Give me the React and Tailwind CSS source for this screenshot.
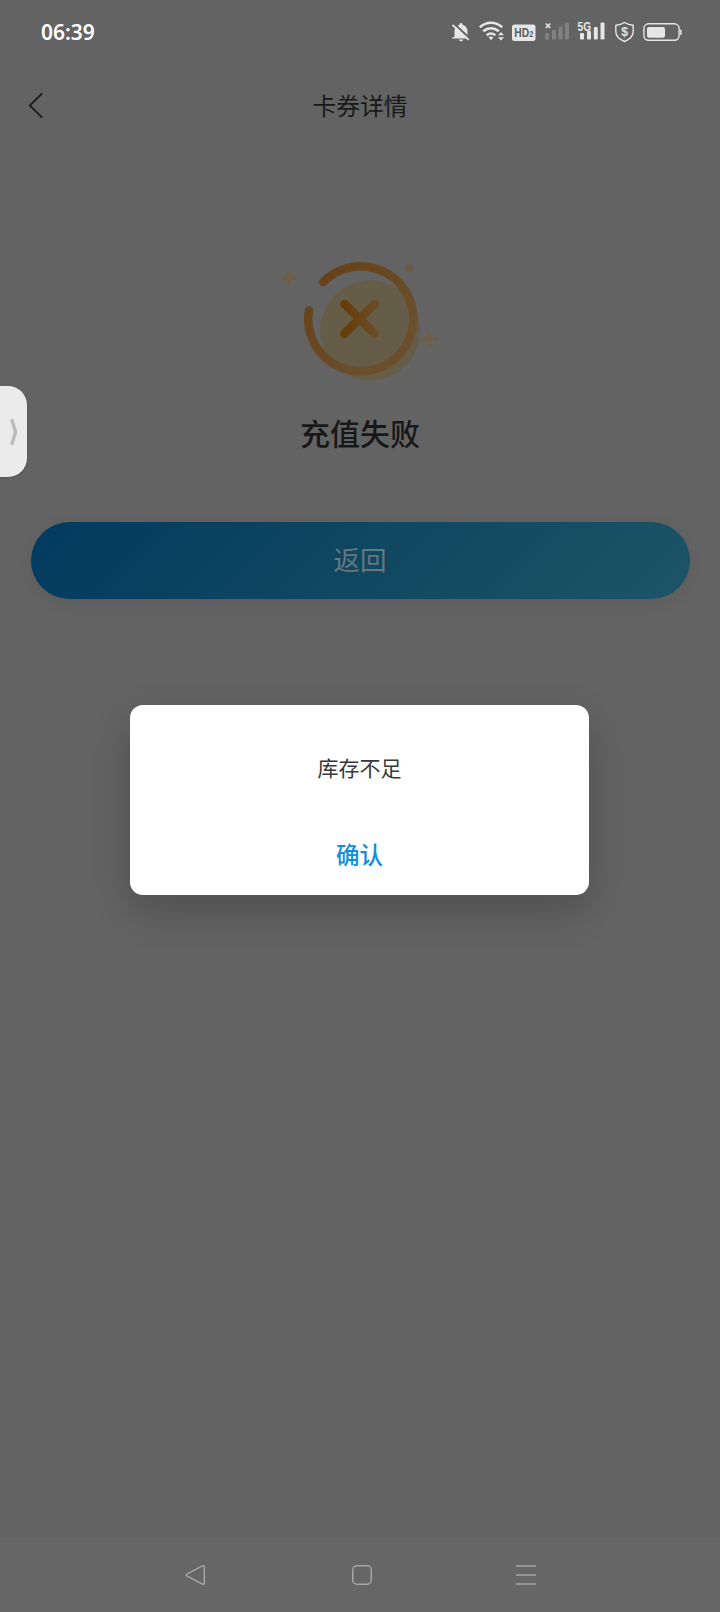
const FONT = "font-['Noto_Sans_CJK_SC',sans-serif]";

function StatusIcons() {
  return (
    <div className="flex h-6 items-center text-[#e6e6e6]">
      <svg className="mr-[9px] h-6 w-[18px]" viewBox="453 20 18 24" fill="none">
        <path d="M455.500 37v-6c0-3.500 2.200-5.500 4.700-6.100a1.800 1.800 0 0 1 3.600 0c2.600.600 4.700 2.600 4.700 6.100v3.500l1.800 2.700v1.300H453.200V37.200Z" fill="currentColor" />
        <path d="M459.800 39.500h4.400c-.3 1.200-1.100 1.800-2.200 1.800s-1.900-.6-2.200-1.800Z" fill="currentColor" />
        <path d="M454.800 23.500l16 15" stroke="#636363" strokeWidth="2" />
        <path d="M453.500 25l16.200 14.800" stroke="currentColor" strokeWidth="1.800" />
      </svg>
      <svg className="mr-[7px] h-6 w-[26px]" viewBox="479 20 26 24" fill="none">
        <g stroke="currentColor" strokeWidth="2.600">
          <path d="M479.800 27.200c6.800-5.900 15.600-5.900 22.400 0" />
          <path d="M483.200 31.300c4.800-4 10.800-4 15.600 0" />
          <path d="M486.700 35.200c2.800-2.200 5.800-2.200 8.600 0" />
        </g>
        <path d="M488.500 37.300c1.600-1.200 3.400-1.200 5 0l-2.500 3Z" fill="currentColor" />
        <path d="M498 35.300l3-3.300 3 3.300ZM498 37.200l3 3.300 3-3.300Z" fill="currentColor" />
      </svg>
      <svg className="mr-[9px] h-6 w-6" viewBox="512 20 24 24">
        <rect x="512" y="24.500" width="23.500" height="16.500" rx="2.500" fill="currentColor" />
        <text x="514.300" y="37.200" textLength="19" lengthAdjust="spacingAndGlyphs" className="font-['Liberation_Sans',sans-serif] text-[12.500px] font-bold" fill="#5c5c5c">HD<tspan className="text-[9px]">2</tspan></text>
      </svg>
      <svg className="mr-2 h-6 w-6" viewBox="545 20 24 24" fill="none">
        <path d="M545.800 23.500l4.500 4.500m0-4.500l-4.500 4.500" stroke="currentColor" strokeWidth="1.700" />
        <g fill="#808080">
          <rect x="545" y="33" width="4" height="6.500" rx="1" />
          <rect x="552" y="30" width="4" height="9.500" rx="1" />
          <rect x="558.500" y="26.500" width="4" height="13" rx="1" />
          <rect x="565" y="22.500" width="4" height="17" rx="1" />
        </g>
      </svg>
      <svg className="mr-[10px] h-6 w-7" viewBox="577 20 28 24" fill="currentColor">
        <text x="577.500" y="30.600" textLength="13.500" lengthAdjust="spacingAndGlyphs" className="font-['Liberation_Sans',sans-serif] text-[12px] font-bold">5G</text>
        <rect x="580" y="33" width="4" height="6.500" rx="1" />
        <rect x="587" y="31" width="4" height="8.500" rx="1" />
        <rect x="593.800" y="27" width="4" height="12.500" rx="1" />
        <rect x="600.500" y="22.500" width="4" height="17" rx="1" />
      </svg>
      <svg className="mr-[9px] h-6 w-[19px]" viewBox="615 20 19 24" fill="none">
        <path d="M624.500 22.500c2.600 1.800 5.400 2.600 8.700 2.800v6.200c0 4.500-3.200 7.700-8.700 10-5.500-2.300-8.700-5.500-8.700-10v-6.200c3.300-.2 6.100-1 8.700-2.800Z" stroke="currentColor" strokeWidth="1.400" strokeLinejoin="round" />
        <text x="624.500" y="36.200" textAnchor="middle" className="font-['Liberation_Sans',sans-serif] text-[12px] font-bold" fill="currentColor">$</text>
      </svg>
      <svg className="h-6 w-[39px]" viewBox="643 20 39 24" fill="none">
        <rect x="643.900" y="23.800" width="35.200" height="16.500" rx="4.800" stroke="currentColor" strokeWidth="1.400" />
        <rect x="647" y="27" width="18" height="10.700" rx="2" fill="currentColor" />
        <path d="M680.200 29.300c1 .2 1.500.6 1.500 1.300v3.300c0 .700-.5 1.100-1.500 1.300Z" fill="currentColor" />
      </svg>
    </div>
  );
}

function FailureIcon() {
  return (
    <svg className="h-[140px] w-[180px]" viewBox="270 250 180 140" fill="none">
      <defs>
        <linearGradient id="ring" gradientUnits="userSpaceOnUse" x1="318" y1="280" x2="390" y2="345">
          <stop stopColor="#66421a" />
          <stop offset="1" stopColor="#6a4f2d" />
        </linearGradient>
        <linearGradient id="cross" gradientUnits="userSpaceOnUse" x1="345" y1="319" x2="377" y2="319">
          <stop stopColor="#673d08" />
          <stop offset="1" stopColor="#6a4d2b" />
        </linearGradient>
      </defs>
      <circle cx="370.200" cy="330.500" r="50" fill="#665d48" />
      <path d="M323.300 282A52.500 52.500 0 1 1 308.900 310.500" stroke="url(#ring)" strokeWidth="8.600" strokeLinecap="round" />
      <path d="M344.700 304.200l30 29.400M374.700 304.200l-30.200 29.400" stroke="url(#cross)" strokeWidth="8.800" strokeLinecap="round" />
      <g fill="#6b5f48">
        <rect x="281" y="276.300" width="15.600" height="4" rx="1.500" />
        <rect x="286.800" y="270.500" width="4" height="15.600" rx="1.500" />
        <rect x="421.700" y="337" width="15.600" height="4" rx="1.500" />
        <rect x="427.500" y="331.200" width="4" height="15.600" rx="1.500" />
      </g>
      <circle cx="408.800" cy="268.300" r="4" fill="#6a5b43" />
    </svg>
  );
}

export default function App() {
  return (
    <div className={`relative flex h-[1612px] w-[720px] flex-col overflow-hidden bg-[#636363] ${FONT}`}>
      <div className="flex h-16 shrink-0 items-center justify-between pl-[41px] pr-[38px]">
        <span className="font-['Noto_Sans',sans-serif] text-[21px] font-[560] leading-none text-white">06:39</span>
        <StatusIcons />
      </div>
      <header className="grid h-[84px] shrink-0 grid-cols-[1fr_auto_1fr] items-center px-7">
        <svg className="h-7 w-4" viewBox="0 0 16 28" fill="none">
          <path d="M14.200 1.400L1.800 13.500l12.400 12.100" stroke="#1c1c1c" strokeWidth="1.900" />
        </svg>
        <h1 className="pb-[3px] text-[23.800px] leading-none text-[#191919]">卡券详情</h1>
      </header>
      <main className="flex grow flex-col items-center pt-[102px]">
        <FailureIcon />
        <h2 className="mt-[22px] text-[30px] font-medium leading-10 text-[#181818]">充值失败</h2>
        <button className="mt-[70px] h-[77px] w-[659px] rounded-full bg-linear-[135deg,#003b60,#104761_50%,#1d5467] pb-[2px] text-[26.500px] leading-none text-[#66777f] shadow-[0_4px_16px_rgba(0,0,0,0.08)]">返回</button>
      </main>
      <nav className="grid h-[75px] shrink-0 grid-cols-3 items-center bg-[#666666] px-[114px] text-[#a5a5a5]">
        <svg className="ml-[71px] h-[22px] w-[22px]" viewBox="0 0 22 22" fill="none">
          <path d="M2.300 9.800L17.400 1.900q1.900-.8 1.900 1.300v15.600q0 2.100-1.900 1.300L2.300 12.200q-2.200-1.200 0-2.400Z" stroke="currentColor" strokeWidth="1.500" />
        </svg>
        <svg className="ml-[74px] h-5 w-5" viewBox="0 0 20 20" fill="none">
          <rect x=".75" y=".75" width="18.500" height="18.500" rx="4" stroke="currentColor" strokeWidth="1.500" />
        </svg>
        <svg className="ml-[74px] h-5 w-5" viewBox="0 0 20 20" fill="none">
          <path d="M0 1h20M0 10h20M0 19h20" stroke="currentColor" strokeWidth="1.700" />
        </svg>
      </nav>
      <aside className="absolute left-0 top-[386px] flex h-[91px] w-[27px] items-center justify-end rounded-r-[19px] bg-[#ebebeb] pr-[9px] shadow-[0_1px_3px_rgba(0,0,0,0.15)]">
        <svg className="h-7 w-2" viewBox="0 0 8 28" fill="none">
          <path d="M2 2.500L5.700 14 2 25.500" stroke="#bcbcbc" strokeWidth="3.400" strokeLinecap="round" strokeLinejoin="round" />
        </svg>
      </aside>
      <section role="dialog" className="absolute left-[130px] top-[705px] flex h-[190px] w-[459px] flex-col items-center rounded-[13px] bg-white pt-[46px] shadow-[0_16px_40px_rgba(0,0,0,0.2)]">
        <p className="text-[21px] leading-8 text-[#383838]">库存不足</p>
        <button className="mt-[55px] text-[23.500px] font-medium leading-8 text-[#108ee0]">确认</button>
      </section>
    </div>
  );
}
